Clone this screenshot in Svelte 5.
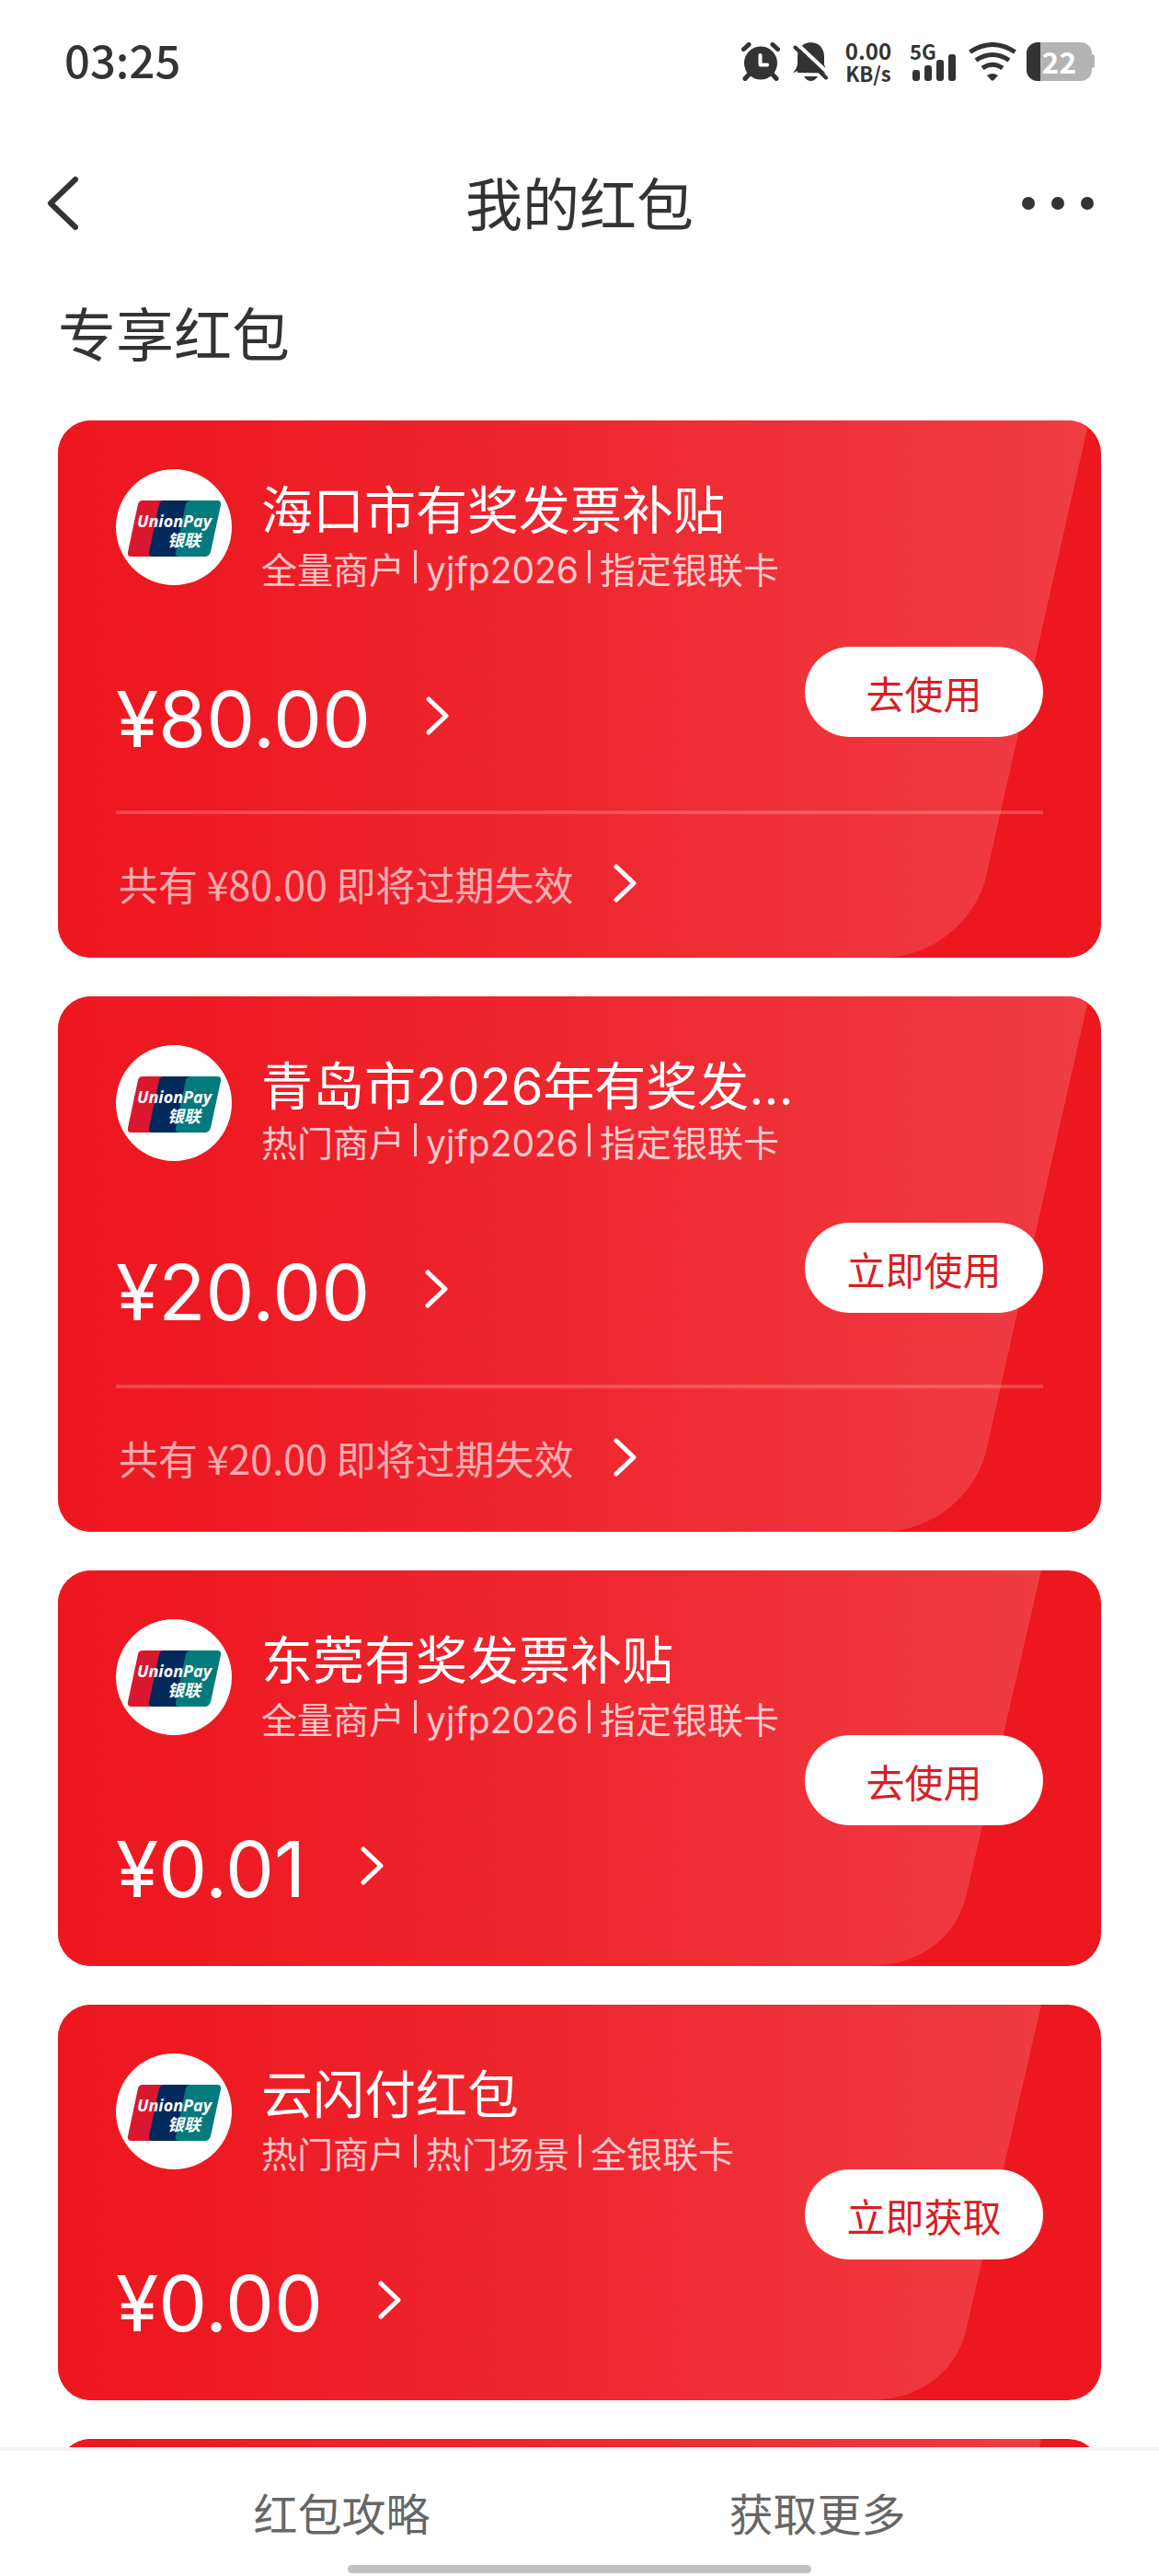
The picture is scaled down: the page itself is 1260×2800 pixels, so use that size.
<script>
  const coupons = [
    {
      title: '海口市有奖发票补贴',
      tags: ['全量商户', 'yjfp2026', '指定银联卡'],
      amount: '80.00',
      action: '去使用',
      expiring: '80.00',
    },
    {
      title: '青岛市2026年有奖发…',
      tags: ['热门商户', 'yjfp2026', '指定银联卡'],
      amount: '20.00',
      action: '立即使用',
      expiring: '20.00',
      compact: true,
    },
    {
      title: '东莞有奖发票补贴',
      tags: ['全量商户', 'yjfp2026', '指定银联卡'],
      amount: '0.01',
      action: '去使用',
    },
    {
      title: '云闪付红包',
      tags: ['热门商户', '热门场景', '全银联卡'],
      amount: '0.00',
      action: '立即获取',
    },
  ];
</script>

{#snippet chevron()}
  <svg class="chevron" viewBox="0 0 26 42" aria-hidden="true">
    <path d="M3 3 L22 21 L3 39" fill="none" stroke="#fff" stroke-width="5" stroke-linecap="round" stroke-linejoin="round" />
  </svg>
{/snippet}

{#snippet backdrop(tall)}
  <svg class="backdrop" viewBox={tall ? '0 0 1134 583' : '0 0 1134 430'} preserveAspectRatio="none" aria-hidden="true">
    <defs>
      <linearGradient id={tall ? 'sheen-tall' : 'sheen-short'} gradientUnits="userSpaceOnUse" x1="0" y1="0" x2="1100" y2="0">
        <stop offset="0" stop-color="#ed171f" />
        <stop offset="0.12" stop-color="#ee1922" />
        <stop offset="0.5" stop-color="#ee272f" />
        <stop offset="1" stop-color="#f03c43" />
      </linearGradient>
    </defs>
    {#if tall}
      <path d="M0 0H1121L1009 495C1000 535 960 580 900 583H0Z" fill="url(#sheen-tall)" />
    {:else}
      <path d="M0 0H1069L987 355C978 392 945 428 885 430H0Z" fill="url(#sheen-short)" />
    {/if}
  </svg>
{/snippet}

{#snippet unionpay()}
  <svg class="avatar" viewBox="0 0 126 126" role="img" aria-label="UnionPay 银联">
    <circle cx="63" cy="63" r="63" fill="#fff" />
    <path d="M29 34H54L41 95H17Q12 95 13 90L24 38Q25 34 29 34Z" fill="#d9182f" />
    <path d="M53 34H84L70 95H40Q35 95 36 90L47 38Q48 34 53 34Z" fill="#03285a" />
    <path d="M82 34H110Q115 34 114 39L103 90Q101 95 97 95H69Q64 95 65 90L76 38Q77 34 82 34Z" fill="#037a7c" />
    <text x="23" y="63" class="brand-latin">UnionPay</text>
    <text x="56" y="84" class="brand-cjk">银联</text>
  </svg>
{/snippet}

<div class="screen">
  <div class="status">
    <time>03:25</time>
    <div class="indicators">
      <svg class="alarm" viewBox="0 0 42 42" aria-hidden="true">
        <g stroke="#333" stroke-width="5" stroke-linecap="round">
          <path d="M2.500 7.500L8 2.500M34 2.500L39.500 7.500" />
          <path d="M9 34L4 39.500M33 34L38 39.500" />
        </g>
        <circle cx="21" cy="22.500" r="18" fill="#333" />
        <path d="M20.500 14V24.500H28" fill="none" stroke="#fff" stroke-width="4" stroke-linejoin="round" stroke-linecap="round" />
      </svg>
      <svg class="bell" viewBox="0 0 39 42" aria-hidden="true">
        <path d="M5 33V31L0 33.500Q4 29 5 24V15Q6 1 19.500 0Q33 1 34 15V24Q35 29 39 33.500Z" fill="#333" />
        <path d="M12 37H27Q24 42 19.500 42Q15 42 12 37Z" fill="#333" />
        <path d="M5 2L40 35" stroke="#fff" stroke-width="4" />
        <path d="M2.500 5.500L36 38.500" stroke="#333" stroke-width="4" stroke-linecap="round" />
      </svg>
      <div class="speed"><span>0.00</span><span>KB/s</span></div>
      <div class="signal">
        <span>5G</span>
        <svg viewBox="0 0 47 29" aria-hidden="true">
          <g fill="#333">
            <rect x="0" y="17" width="8" height="12" rx="3" />
            <rect x="13" y="12" width="8" height="17" rx="3" />
            <rect x="26" y="6" width="8" height="23" rx="3" />
            <rect x="39" y="0" width="8" height="29" rx="3" />
          </g>
        </svg>
      </div>
      <svg class="wifi" viewBox="0 0 52 42" aria-hidden="true">
        <g fill="none" stroke="#333" stroke-width="5">
          <path d="M1.500 10.500Q26 -5.500 50.500 10.500" />
          <path d="M8 19.500Q26 7.500 44 19.500" />
          <path d="M15 28Q26 20.500 37 28" />
        </g>
        <path d="M20 36Q26 32 32 36L27.500 41Q26 42.500 24.500 41Z" fill="#333" />
      </svg>
      <div class="battery"><span>22</span></div>
    </div>
  </div>

  <header>
    <button class="icon-button" aria-label="返回">
      <svg class="back" viewBox="0 0 36 60" aria-hidden="true">
        <path d="M32 4L5 30L32 56" fill="none" stroke="#333" stroke-width="6" stroke-linecap="round" stroke-linejoin="round" />
      </svg>
    </button>
    <h1>我的红包</h1>
    <button class="icon-button end" aria-label="更多">
      <svg class="more" viewBox="0 0 80 16" aria-hidden="true">
        <g fill="#333"><circle cx="8" cy="8" r="7" /><circle cx="40" cy="8" r="7" /><circle cx="72" cy="8" r="7" /></g>
      </svg>
    </button>
  </header>

  <main>
    <h2>专享红包</h2>
    {#each coupons as c}
      <article class="card" class:compact={c.compact}>
        {@render backdrop(!!c.expiring)}
        <div class="body" class:short={!c.expiring}>
          <div class="info">
            <div class="head">
              {@render unionpay()}
              <div class="text">
                <h3>{c.title}</h3>
                <ul>
                  {#each c.tags as tag}<li>{tag}</li>{/each}
                </ul>
              </div>
            </div>
            <a class="amount" href="#detail"><span>¥{c.amount}</span>{@render chevron()}</a>
          </div>
          <button class="use">{c.action}</button>
        </div>
        {#if c.expiring}
          <a class="expiring" href="#expiring"><span>共有 ¥{c.expiring} 即将过期失效</span>{@render chevron()}</a>
        {/if}
      </article>
    {/each}
    <article class="card upcoming">{@render backdrop(false)}</article>
  </main>

  <footer>
    <nav>
      <a href="#guide">红包攻略</a>
      <a href="#more">获取更多</a>
    </nav>
    <div class="home-bar"></div>
  </footer>
</div>

<style>
  :global(body) {
    margin: 0;
    background: #fff;
  }

  .screen {
    height: 100vh;
    display: flex;
    flex-direction: column;
    color: #333;
    font-family: Inter, 'Noto Sans CJK SC', sans-serif;
  }

  h1, h2, h3, ul {
    margin: 0;
    padding: 0;
    font-weight: 400;
  }

  a {
    color: inherit;
    text-decoration: none;
  }

  button {
    border: 0;
    padding: 0;
    background: none;
    font-family: inherit;
    color: inherit;
    cursor: pointer;
  }

  svg {
    display: block;
    flex: none;
  }

  .status {
    flex: none;
    height: 134px;
    padding: 0 70px;
    display: flex;
    align-items: center;
    justify-content: space-between;
    font-family: 'Noto Sans CJK SC', sans-serif;
  }

  time {
    padding-bottom: 6px;
    font-size: 49px;
    line-height: 60px;
    font-weight: 500;
  }

  .indicators {
    height: 42px;
    display: flex;
    align-items: center;
    gap: 11px;
  }

  .alarm {
    width: 42px;
    height: 42px;
  }

  .bell {
    width: 39px;
    height: 42px;
    margin-left: 3px;
  }

  .speed {
    width: 56px;
    margin-left: 4px;
    display: flex;
    flex-direction: column;
    align-items: center;
    font-size: 24px;
    line-height: 24px;
    font-weight: 700;
  }

  .speed span + span {
    font-size: 22px;
  }

  .signal {
    width: 50px;
    height: 42px;
    margin-left: 6px;
    display: grid;
  }

  .signal span,
  .signal svg {
    grid-area: 1 / 1;
  }

  .signal span {
    font-size: 22px;
    line-height: 18px;
    font-weight: 700;
  }

  .signal svg {
    width: 47px;
    height: 29px;
    align-self: end;
    justify-self: end;
  }

  .wifi {
    width: 52px;
    height: 42px;
    margin-left: 3px;
  }

  .battery {
    width: 71px;
    height: 42px;
    margin-right: 3px;
    border-radius: 12px;
    background: linear-gradient(90deg, #333 15px, #b3b3b3 15px);
    position: relative;
    display: flex;
    align-items: center;
    justify-content: center;
    color: #fff;
    font-size: 32px;
    line-height: 40px;
    font-weight: 700;
  }

  .battery span {
    padding-bottom: 2px;
  }

  .battery::after {
    content: '';
    position: absolute;
    left: 100%;
    top: 13px;
    width: 3px;
    height: 15px;
    border-radius: 0 3px 3px 0;
    background: #b3b3b3;
  }

  header {
    flex: none;
    height: 174px;
    padding: 0 70px 0 50px;
    display: grid;
    grid-template-columns: 1fr auto 1fr;
    align-items: center;
  }

  h1 {
    padding-top: 6px;
    margin-left: 20px;
    font-size: 62px;
    line-height: 90px;
  }

  .icon-button {
    justify-self: start;
  }

  .icon-button.end {
    justify-self: end;
  }

  .back {
    width: 36px;
    height: 60px;
  }

  .more {
    width: 80px;
    height: 16px;
  }

  main {
    flex: 1;
    min-height: 0;
    overflow-y: auto;
    scrollbar-width: none;
    padding: 0 63px;
    display: flex;
    flex-direction: column;
    gap: 42px;
  }

  h2 {
    padding-top: 6px;
    font-size: 63px;
    line-height: 101px;
  }

  .card {
    flex: none;
    position: relative;
    overflow: hidden;
    border-radius: 36px;
    background: #ed171f;
    color: #fff;
  }

  .upcoming {
    height: 430px;
  }

  .backdrop {
    position: absolute;
    inset: 0;
    width: 100%;
    height: 100%;
  }

  .body {
    position: relative;
    padding: 53px 63px;
    display: flex;
    justify-content: space-between;
    align-items: flex-start;
  }

  .body.short {
    padding-bottom: 59px;
  }

  .compact .body {
    padding-bottom: 54px;
  }

  .info {
    flex: 1;
    min-width: 0;
  }

  .head {
    display: flex;
    gap: 32px;
    height: 126px;
  }

  .avatar {
    width: 126px;
    height: 126px;
  }

  .brand-latin {
    font: italic 700 18px 'Open Sans', sans-serif;
    fill: #fff;
  }

  .brand-cjk {
    font: italic 700 18px 'Noto Sans CJK SC', sans-serif;
    fill: #fff;
  }

  .text {
    padding-top: 13px;
    white-space: nowrap;
  }

  h3 {
    font-size: 56px;
    line-height: 65px;
  }

  ul {
    margin-top: 10px;
    display: flex;
    align-items: center;
    list-style: none;
    color: rgba(255, 255, 255, 0.75);
    font-size: 39px;
    line-height: 44px;
  }

  .compact ul {
    margin-top: 7px;
  }

  li {
    display: flex;
  }

  li + li::before {
    content: '';
    width: 3px;
    height: 36px;
    margin: 0 10px;
    background: currentColor;
  }

  .amount {
    margin-top: 92px;
    display: flex;
    align-items: center;
    gap: 60px;
    font-size: 84px;
    line-height: 92px;
  }

  .amount span {
    padding-top: 8px;
  }

  .compact .amount {
    margin-top: 89px;
  }

  .chevron {
    width: 26px;
    height: 42px;
  }

  .use {
    flex: none;
    width: 259px;
    height: 98px;
    margin-top: 193px;
    padding-top: 1px;
    border-radius: 49px;
    background: #fff;
    color: #d81e26;
    font-size: 42px;
  }

  .short .use {
    margin-top: 126px;
  }

  .expiring {
    position: relative;
    margin: 0 63px;
    height: 150px;
    border-top: 4px solid rgba(255, 255, 255, 0.2);
    padding: 0 0 6px 3px;
    display: flex;
    align-items: center;
    gap: 43px;
    font-family: 'Noto Sans CJK SC', sans-serif;
    font-size: 43px;
    line-height: 60px;
  }

  .expiring span {
    color: rgba(255, 255, 255, 0.65);
  }

  footer {
    flex: none;
    height: 136px;
    border-top: 4px solid #f4f4f4;
    background: #fff;
    display: flex;
    flex-direction: column;
    justify-content: space-between;
  }

  nav {
    padding: 36px 113px 0;
    display: grid;
    grid-template-columns: 1fr 1fr;
    justify-items: center;
    color: #666;
    font-size: 48px;
    line-height: 68px;
  }

  .home-bar {
    width: 40%;
    height: 9px;
    margin: 0 auto 3px;
    border-radius: 5px;
    background: #c1c1c1;
  }
</style>
